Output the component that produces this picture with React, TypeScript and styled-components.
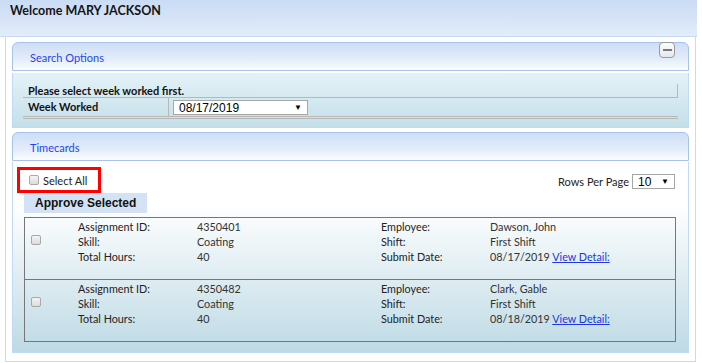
import React from 'react';
import styled, { createGlobalStyle } from 'styled-components';

const GlobalStyle = createGlobalStyle`
  html, body {
    margin: 0;
    padding: 0;
    background: #ffffff;
  }
  body {
    font-family: Lato, 'Open Sans', sans-serif;
    color: #222;
  }
`;

const Page = styled.div`
  width: 702px;
  height: 363px;
  overflow: hidden;
`;

const WelcomeBar = styled.div`
  width: 697px;
  height: 37px;
  box-sizing: border-box;
  padding: 3px 10px 0;
  background: linear-gradient(#cadbf5, #e2ecfa);
  border-bottom: 1px solid #c5d9f3;
  font-size: 12.5px;
  font-weight: bold;
  color: #141414;
`;

const Panel = styled.div`
  margin-left: 5px;
  width: 691px;
  box-sizing: border-box;
  padding: 5px 6px 8px;
  border: 1px solid #c6dcf5;
  border-top: none;
  display: flex;
  flex-direction: column;
`;

const SectionHeader = styled.div`
  height: 29px;
  box-sizing: border-box;
  padding: 2px 0 0 17px;
  border: 1px solid #a7c3ea;
  border-radius: 6px 6px 0 0;
  background: linear-gradient(#cddff6, #e3ecfa 60%, #fbfdff);
  display: flex;
  align-items: center;
  font-size: 11px;
  color: #1c46f2;
`;

const CollapseButton = styled.div`
  margin-left: auto;
  margin-right: 13px;
  align-self: flex-start;
  margin-top: -3px;
  width: 16px;
  height: 16px;
  box-sizing: border-box;
  border: 1px solid #9a9a9a;
  border-radius: 4px;
  background: linear-gradient(#fdfdfd, #e4e8ee);
  display: flex;
  align-items: center;
  justify-content: center;

  &::after {
    content: '';
    width: 9px;
    height: 2px;
    background: #7a7a7a;
  }
`;

const SearchBody = styled.div`
  margin-top: 2px;
  margin-bottom: 4px;
  height: 55px;
  box-sizing: border-box;
  padding: 11px 10px 0 10px;
  border: 1px solid #c0daf5;
  border-top: none;
  background: linear-gradient(#e4f2f8, #c4dfe9);
`;

const SearchTable = styled.div`
  width: 655px;
  font-size: 11px;
  font-weight: bold;
  color: #111;
`;

const MessageRow = styled.div`
  height: 14px;
  box-sizing: border-box;
  padding-left: 5px;
  border-right: 1px solid #b8b8b8;
  border-bottom: 1px solid #b8b8b8;
  line-height: 13px;
`;

const WeekRow = styled.div`
  display: flex;
  height: 21px;
  box-sizing: border-box;
  border-bottom: 3px double #b8b8b8;
`;

const WeekLabel = styled.div`
  width: 146px;
  box-sizing: border-box;
  padding-left: 5px;
  border-right: 1px solid #b8b8b8;
  line-height: 18px;
`;

const WeekValue = styled.div`
  padding: 2px 0 0 4px;
`;

const FakeSelect = styled.div<{ $w: number }>`
  width: ${p => p.$w}px;
  height: 15px;
  box-sizing: border-box;
  padding: 0 5px;
  border: 1px solid #a6a6a6;
  background: #fff;
  display: flex;
  align-items: center;
  justify-content: space-between;
  font-family: 'Liberation Sans', Arial, sans-serif;
  font-size: 12px;
  font-weight: normal;
  color: #000;

  &::after {
    content: '▼';
    font-size: 8px;
  }
`;

const CardsBody = styled.div`
  margin-top: 1px;
  height: 191px;
  box-sizing: border-box;
  padding: 5px 13px 0 4px;
  border: 1px solid #c0daf5;
  border-top: none;
  background: linear-gradient(#ffffff 22%, #bedae5);
`;

const TopBar = styled.div`
  display: flex;
  justify-content: space-between;
  align-items: flex-start;
`;

const SelectAllBox = styled.label`
  width: 84px;
  height: 26px;
  box-sizing: border-box;
  padding-left: 9px;
  border: 3px solid #ff0000;
  display: flex;
  align-items: center;
  gap: 4px;
  font-size: 11px;
  color: #222;
`;

const Check = styled.span`
  width: 10px;
  height: 10px;
  box-sizing: border-box;
  border: 1px solid #a8a8a8;
  border-radius: 2px;
  background: linear-gradient(#f4f4f4, #dcdcdc);
`;

const RowsPerPage = styled.div`
  margin-top: 7px;
  display: flex;
  align-items: center;
  gap: 3px;
  font-size: 11px;
  color: #222;
`;

const ApproveButton = styled.div`
  margin-left: 7px;
  width: 123px;
  height: 20px;
  box-sizing: border-box;
  padding-left: 11px;
  background: #d3e2f5;
  font-family: 'Liberation Sans', Arial, sans-serif;
  font-weight: bold;
  font-size: 12px;
  line-height: 21px;
  color: #111;
`;

const CardTable = styled.div`
  margin: 4px 0 0 7px;
  width: 652px;
  box-sizing: border-box;
  border: 1px solid #777;
`;

const Card = styled.div`
  display: grid;
  grid-template-columns: 53px 119px 184px 109px 1fr;
  grid-auto-rows: 15px;
  padding: 1px 0 15px;
  font-size: 10.8px;
  line-height: 15px;
  color: #222;

  & + & {
    border-top: 1px solid #777;
  }
`;

const Cell = styled.span<{ $col: number; $row: number }>`
  grid-column: ${p => p.$col};
  grid-row: ${p => p.$row};
`;

const Value = styled(Cell)`
  color: #333;
`;

const RowCheck = styled(Check)`
  grid-column: 1;
  grid-row: 2;
  margin: 1px 0 0 6px;
`;

const Link = styled.a`
  color: #2236e0;
  text-decoration: underline;
`;

const cards = [
  { id: '4350401', skill: 'Coating', hours: '40', employee: 'Dawson, John', shift: 'First Shift', date: '08/17/2019' },
  { id: '4350482', skill: 'Coating', hours: '40', employee: 'Clark, Gable', shift: 'First Shift', date: '08/18/2019' },
];

export default function App() {
  return (
    <Page>
      <GlobalStyle />
      <WelcomeBar>Welcome MARY JACKSON</WelcomeBar>
      <Panel>
        <SectionHeader>
          Search Options
          <CollapseButton />
        </SectionHeader>
        <SearchBody>
          <SearchTable>
            <MessageRow>Please select week worked first.</MessageRow>
            <WeekRow>
              <WeekLabel>Week Worked</WeekLabel>
              <WeekValue>
                <FakeSelect $w={135}>08/17/2019</FakeSelect>
              </WeekValue>
            </WeekRow>
          </SearchTable>
        </SearchBody>

        <SectionHeader>Timecards</SectionHeader>
        <CardsBody>
          <TopBar>
            <SelectAllBox>
              <Check />
              Select All
            </SelectAllBox>
            <RowsPerPage>
              Rows Per Page
              <FakeSelect $w={43}>10</FakeSelect>
            </RowsPerPage>
          </TopBar>
          <ApproveButton>Approve Selected</ApproveButton>
          <CardTable>
            {cards.map(c => (
              <Card key={c.id}>
                <RowCheck />
                <Cell $col={2} $row={1}>Assignment ID:</Cell>
                <Value $col={3} $row={1}>{c.id}</Value>
                <Cell $col={4} $row={1}>Employee:</Cell>
                <Value $col={5} $row={1}>{c.employee}</Value>
                <Cell $col={2} $row={2}>Skill:</Cell>
                <Value $col={3} $row={2}>{c.skill}</Value>
                <Cell $col={4} $row={2}>Shift:</Cell>
                <Value $col={5} $row={2}>{c.shift}</Value>
                <Cell $col={2} $row={3}>Total Hours:</Cell>
                <Value $col={3} $row={3}>{c.hours}</Value>
                <Cell $col={4} $row={3}>Submit Date:</Cell>
                <Value $col={5} $row={3}>
                  {c.date} <Link href="#">View Detail:</Link>
                </Value>
              </Card>
            ))}
          </CardTable>
        </CardsBody>
      </Panel>
    </Page>
  );
}
